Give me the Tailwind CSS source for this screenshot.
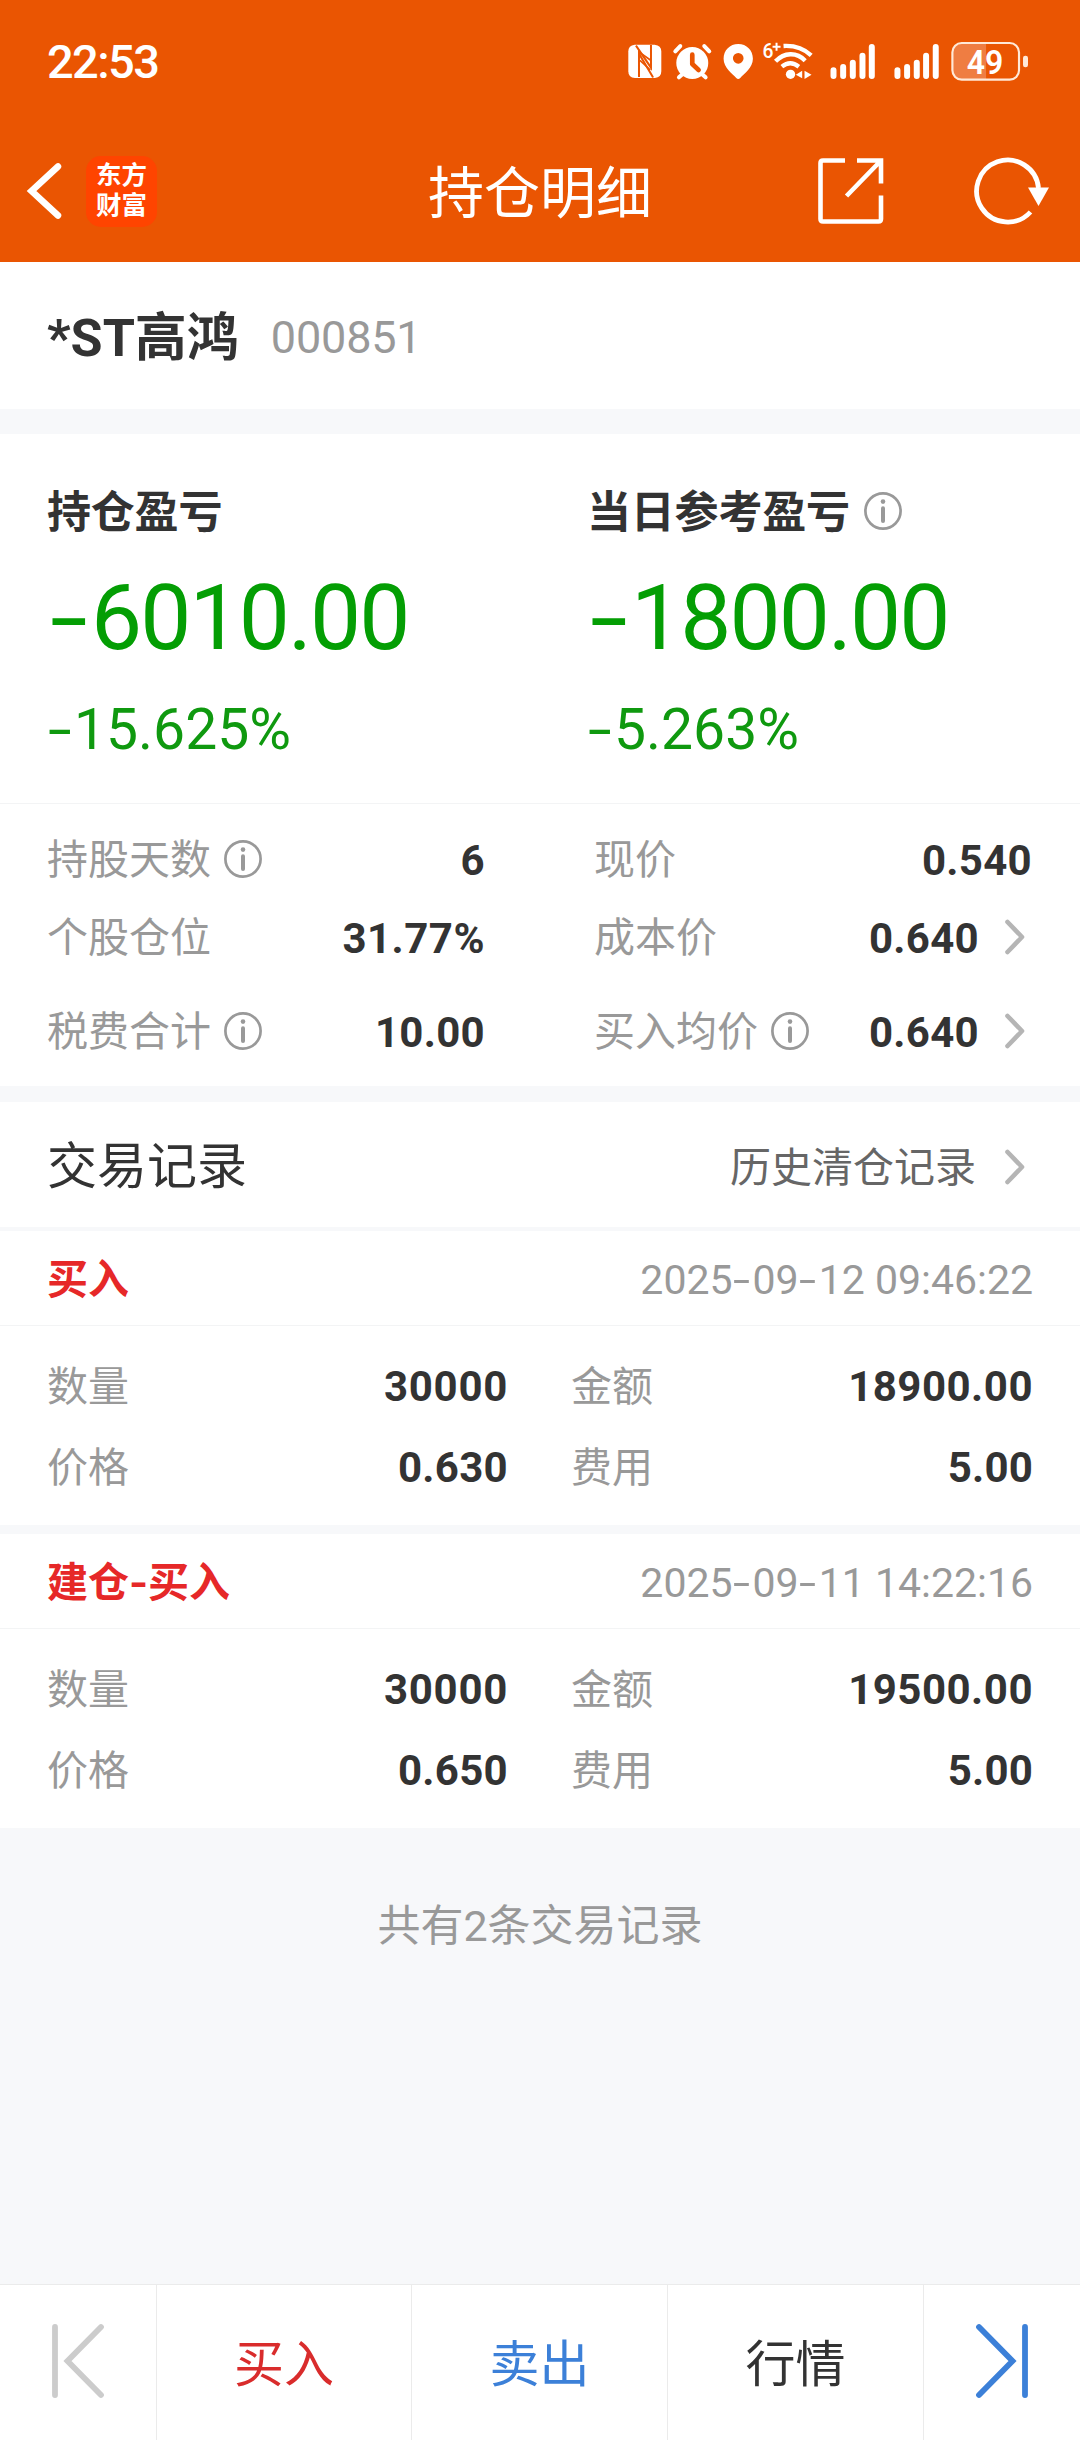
<!DOCTYPE html>
<html lang="zh-CN">
<head>
<meta charset="utf-8">
<title>持仓明细</title>
<script src="https://cdn.jsdelivr.net/npm/@tailwindcss/browser@4"></script>
</head>
<body class="bg-[#f7f8fa] font-['Roboto','Noto_Sans_CJK_SC',sans-serif] text-[#333] leading-none">
<svg class="hidden">
  <symbol id="info" viewBox="0 0 38 38"><circle cx="19" cy="19" r="17.6" fill="none" stroke="#999" stroke-width="2.7"/><circle cx="19" cy="9.6" r="2.3" fill="#999"/><path d="M19 16.3V29" stroke="#999" stroke-width="4" stroke-linecap="round"/></symbol>
  <symbol id="chev" viewBox="0 0 20 36"><path d="M2.5 3L17 18L2.5 33" fill="none" stroke="#b5b5b5" stroke-width="4.6" stroke-linecap="round" stroke-linejoin="round"/></symbol>
</svg>
<div class="flex h-[2440px] w-[1080px] flex-col overflow-hidden">
  <header class="h-[262px] shrink-0 bg-[#ea5502] text-white">
    <div class="flex h-[122px] items-center justify-between pl-[47px] pr-[50px]">
      <div class="text-[47px] font-medium tracking-[-1.600px]">22:53</div>
      <svg class="h-10 w-[403px]" viewBox="80 60 1210 120" fill="#fff">
        <path d="M103 71H106L158 171H104Q84 171 84 151V91Q84 73 103 71Z"/>
        <path d="M118 71H163Q183 73 183 91V151Q183 169 164 171H160L120 115V171H106V71Z"/>
        <path d="M107 74L152 140V72M116 168V98L158 169" fill="none" stroke="#ea5502" stroke-width="6"/>
        <path d="M119 95L150 117M119 118L150 147" stroke="#ea5502" stroke-width="5"/>
        <circle cx="276" cy="126" r="48"/>
        <path d="M225 91L240 75M327 91L312 75M248 158L236 169M304 158L316 169" stroke="#fff" stroke-width="12" stroke-linecap="round"/>
        <path d="M276 101V129L295 147" fill="none" stroke="#ea5502" stroke-width="14" stroke-linecap="round" stroke-linejoin="round"/>
        <path fill-rule="evenodd" d="M414 69C439 69 458 88 458 113C458 140 431 158 420 171Q414 177 408 171C397 158 370 140 370 113C370 88 389 69 414 69ZM414 96A16 16 0 1 0 414 128A16 16 0 1 0 414 96Z"/>
        <text x="487" y="112" font-size="62" font-weight="500" textLength="33" lengthAdjust="spacingAndGlyphs">6</text>
        <path d="M529 65V89M517 77H541" stroke="#fff" stroke-width="6"/>
        <path d="M550 75C584 73 610 82 633 103M526 121C552 94 589 92 615 119M545 137Q570 117 596 137" fill="none" stroke="#fff" stroke-width="13"/>
        <circle cx="571" cy="160" r="14"/>
        <path d="M606 149V172L587 161ZM613 149V174L634 161Z"/>
        <g stroke="#fff" stroke-width="18" stroke-linecap="round">
          <path d="M700 148V165M729 138V165M758 125V165M787 104V165M815 78V165"/>
          <path d="M892 148V165M921 138V165M950 125V165M978 104V165M1007 78V165"/>
        </g>
        <path d="M1158 68V175H1084Q1059 175 1059 150V93Q1059 68 1084 68Z" fill="#ef7d42"/>
        <rect x="1057" y="66" width="200" height="110" rx="28" fill="none" stroke="#ffe9d8" stroke-width="6.5"/>
        <rect x="1269" y="104" width="15" height="35" rx="7" fill="#ffe9d8"/>
        <text x="1100" y="158" font-size="98" font-weight="600" textLength="110" lengthAdjust="spacingAndGlyphs">49</text>
      </svg>
    </div>
    <div class="grid h-[138px] grid-cols-[1fr_auto_1fr] items-center">
      <div class="flex items-center pl-[26px]">
        <svg class="h-[60px] w-[38px]" viewBox="0 0 38 60"><path d="M32 5.500L5.500 30L32 54.500" fill="none" stroke="#fff" stroke-width="6.500" stroke-linecap="round" stroke-linejoin="miter"/></svg>
        <div class="ml-[22px] flex size-[71px] flex-col items-center justify-center rounded-[15px] bg-[#ff4400] pb-0.5 text-[25.500px] leading-[30px] font-bold">
          <span>东方</span><span>财富</span>
        </div>
      </div>
      <h1 class="pt-[5px] text-[56px]">持仓明细</h1>
      <div class="flex items-center justify-end pr-[29px]">
        <svg class="h-[66px] w-[66px]" viewBox="0 0 66 66" fill="none" stroke="#fff" stroke-width="4.600"><path d="M27 2.500H5Q2.500 2.500 2.500 5V61Q2.500 63.500 5 63.500H60.500Q63 63.500 63 61V37.500M39 2.500H63V25.500M63 2.500L28.500 38"/></svg>
        <svg class="ml-[90px] h-[68px] w-[77px]" viewBox="0 0 77 68"><path d="M56.500 55A31 31 0 1 1 64.500 31" fill="none" stroke="#fff" stroke-width="4.800"/><path d="M54 30.500H75L64.500 49Z" fill="#fff"/></svg>
      </div>
    </div>
  </header>

  <section class="flex h-[147px] shrink-0 items-center bg-white pl-[47px]">
    <div class="pt-[7px] text-[52px] font-bold">*ST高鸿</div>
    <div class="ml-[32px] pt-1 text-[45px] tracking-[-.2px] text-[#999]">000851</div>
  </section>

  <section class="mt-[25px] h-[652px] shrink-0 bg-white">
    <div class="grid h-[370px] grid-cols-2 border-b border-[#f3f4f5]">
      <div class="pl-[48px] pt-[57px]">
        <div class="-ml-px flex h-10 items-center pt-1 text-[44px] font-bold tracking-[-.2px]">持仓盈亏</div>
        <div class="mt-[37px] flex h-[100px] items-center text-[91px] tracking-[-1.900px] text-[#049e04]"><span class="ml-0.5 inline-block w-[41px] origin-left scale-x-[1.500]">-</span>6010.00</div>
        <div class="mt-[31px] flex h-[60px] items-center text-[57px] text-[#0f990f]"><span class="inline-block w-[26px] origin-left scale-x-[1.500]">-</span>15.625%</div>
      </div>
      <div class="pl-[48px] pt-[57px]">
        <div class="-ml-px flex h-10 items-center pt-1 text-[44px] font-bold tracking-[-.2px]">当日参考盈亏<svg class="-mt-1 ml-[14px] size-[38px]"><use href="#info"/></svg></div>
        <div class="mt-[37px] flex h-[100px] items-center text-[91px] tracking-[-1.900px] text-[#049e04]"><span class="ml-0.5 inline-block w-[41px] origin-left scale-x-[1.500]">-</span>1800.00</div>
        <div class="mt-[31px] flex h-[60px] items-center text-[57px] text-[#0f990f]"><span class="inline-block w-[26px] origin-left scale-x-[1.500]">-</span>5.263%</div>
      </div>
    </div>
    <div class="grid grid-cols-[438px_438px] gap-x-[109px] pl-[47px] pt-[16px] text-[41px] text-[#999]">
      <div class="flex h-[78px] items-center"><span class="pt-[3px]">持股天数</span><svg class="ml-[13px] size-[38px]"><use href="#info"/></svg><b class="ml-auto pt-[3px] text-[42px] tracking-[.3px] text-[#333]">6</b></div>
      <div class="flex h-[78px] items-center"><span class="pt-[3px]">现价</span><b class="ml-auto pt-[3px] text-[42px] tracking-[.3px] text-[#333]">0.540</b></div>
      <div class="flex h-[78px] items-center"><span class="pt-[3px]">个股仓位</span><b class="ml-auto pt-[3px] text-[42px] tracking-[.5px] text-[#333]">31.77%</b></div>
      <div class="flex h-[78px] items-center"><span class="pt-[3px]">成本价</span><b class="ml-auto pt-[3px] text-[42px] tracking-[.3px] text-[#333]">0.640</b><svg class="ml-[26px] mr-[7px] h-9 w-5"><use href="#chev"/></svg></div>
      <div class="mt-4 flex h-[78px] items-center"><span class="pt-[3px]">税费合计</span><svg class="ml-[13px] size-[38px]"><use href="#info"/></svg><b class="ml-auto pt-[3px] text-[42px] tracking-[.3px] text-[#333]">10.00</b></div>
      <div class="mt-4 flex h-[78px] items-center"><span class="pt-[3px]">买入均价</span><svg class="ml-[13px] size-[38px]"><use href="#info"/></svg><b class="ml-auto pt-[3px] text-[42px] tracking-[.3px] text-[#333]">0.640</b><svg class="ml-[26px] mr-[7px] h-9 w-5"><use href="#chev"/></svg></div>
    </div>
  </section>

  <section class="mt-4 flex h-[125px] shrink-0 items-center bg-white pl-[47px] pr-[55px]">
    <h2 class="pt-1 text-[50px]">交易记录</h2>
    <span class="ml-auto pt-2 text-[41px] text-[#666]">历史清仓记录</span>
    <svg class="ml-[29px] mt-1 h-9 w-5"><use href="#chev"/></svg>
  </section>

  <section class="mt-1 h-[294px] shrink-0 bg-white text-[41px] text-[#999]">
    <div class="flex h-[95px] items-center justify-between border-b border-[#f3f4f5] pl-[47px] pr-[47px]">
      <b class="pt-[5px] text-[#e62828]">买入</b>
      <span class="flex pt-1 whitespace-pre">2025<span class="inline-block w-5 origin-left scale-x-[1.500]">-</span>09<span class="inline-block w-5 origin-left scale-x-[1.500]">-</span>12 09:46:22</span>
    </div>
    <div class="grid grid-cols-[461px_462px] gap-x-[63px] pl-[47px] pt-[19px]">
      <div class="flex h-[81px] items-center justify-between"><span class="pt-[3px]">数量</span><b class="pt-0.5 text-[42px] tracking-[.7px] text-[#333]">30000</b></div>
      <div class="flex h-[81px] items-center justify-between"><span class="pt-[3px]">金额</span><b class="pt-0.5 text-[42px] tracking-[.5px] text-[#333]">18900.00</b></div>
      <div class="flex h-[81px] items-center justify-between"><span class="pt-[3px]">价格</span><b class="pt-0.5 text-[42px] tracking-[.3px] text-[#333]">0.630</b></div>
      <div class="flex h-[81px] items-center justify-between"><span class="pt-[3px]">费用</span><b class="pt-0.5 text-[42px] tracking-[.2px] text-[#333]">5.00</b></div>
    </div>
  </section>

  <section class="mt-[9px] h-[294px] shrink-0 bg-white text-[41px] text-[#999]">
    <div class="flex h-[95px] items-center justify-between border-b border-[#f3f4f5] pl-[47px] pr-[47px]">
      <b class="flex pt-[5px] text-[#e62828]">建仓<span class="inline-block w-[19px] origin-left scale-x-[1.200]">-</span>买入</b>
      <span class="flex pt-1 whitespace-pre">2025<span class="inline-block w-5 origin-left scale-x-[1.500]">-</span>09<span class="inline-block w-5 origin-left scale-x-[1.500]">-</span>11 14:22:16</span>
    </div>
    <div class="grid grid-cols-[461px_462px] gap-x-[63px] pl-[47px] pt-[19px]">
      <div class="flex h-[81px] items-center justify-between"><span class="pt-[3px]">数量</span><b class="pt-0.5 text-[42px] tracking-[.7px] text-[#333]">30000</b></div>
      <div class="flex h-[81px] items-center justify-between"><span class="pt-[3px]">金额</span><b class="pt-0.5 text-[42px] tracking-[.5px] text-[#333]">19500.00</b></div>
      <div class="flex h-[81px] items-center justify-between"><span class="pt-[3px]">价格</span><b class="pt-0.5 text-[42px] tracking-[.3px] text-[#333]">0.650</b></div>
      <div class="flex h-[81px] items-center justify-between"><span class="pt-[3px]">费用</span><b class="pt-0.5 text-[42px] tracking-[.2px] text-[#333]">5.00</b></div>
    </div>
  </section>

  <p class="pt-[77px] text-center text-[43px] text-[#999]">共有2条交易记录</p>

  <nav class="mt-auto grid h-[156px] shrink-0 grid-cols-[157px_255px_256px_256px_156px] border-t border-[#ebebeb] bg-white text-[50px]">
    <div class="flex items-center border-r border-[#ebebeb] pl-[51px] pb-1"><svg class="h-[76px] w-[54px]" viewBox="0 0 54 76" fill="none" stroke="#ccc" stroke-width="5.800" stroke-linecap="round"><path d="M4 4V72M50 4L16.500 38L50 72"/></svg></div>
    <div class="flex items-center justify-center border-r border-[#ebebeb] pt-1 text-[#d92c2c]">买入</div>
    <div class="flex items-center justify-center border-r border-[#ebebeb] pt-1 text-[#3c80d8]">卖出</div>
    <div class="flex items-center justify-center border-r border-[#ebebeb] pt-1">行情</div>
    <div class="flex items-center pl-[51px] pb-1"><svg class="h-[76px] w-[54px]" viewBox="0 0 54 76" fill="none" stroke="#3c80d8" stroke-width="5.800" stroke-linecap="round"><path d="M50 4V72M4 4L37.500 38L4 72"/></svg></div>
  </nav>
</div>
</body>
</html>
